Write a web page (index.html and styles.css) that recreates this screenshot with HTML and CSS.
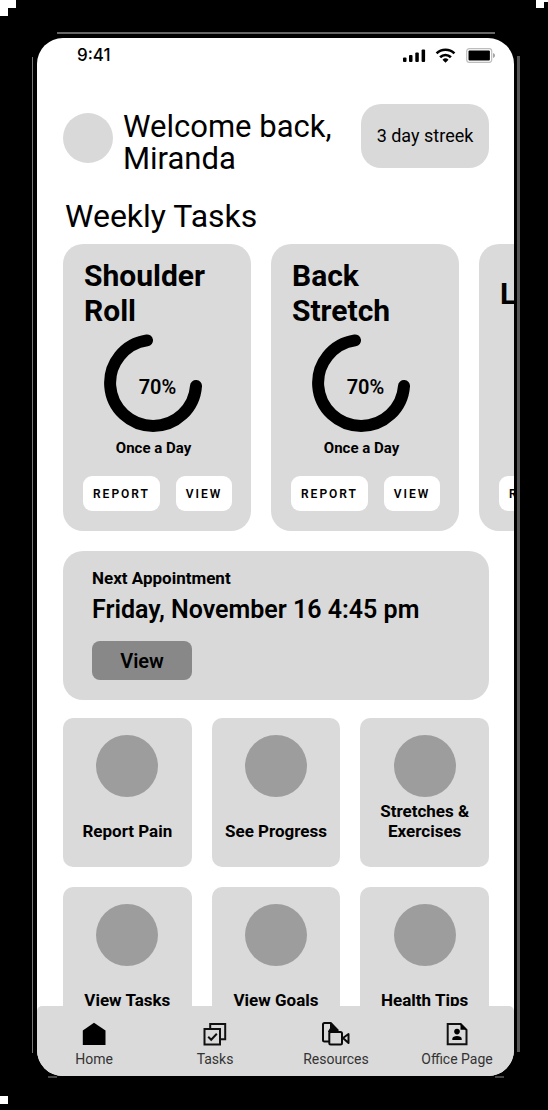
FILE: index.html
```html
<!DOCTYPE html>
<html lang="en">
<head>
<meta charset="utf-8">
<meta name="viewport" content="width=device-width, initial-scale=1">
<title>Home</title>
<link rel="stylesheet" href="styles.css">
</head>
<body>
<div class="frame">
  <div class="screen">
    <main class="content">
      <div class="status">
        <span class="clock">9:41</span>
        <svg class="status-icons" width="95" height="18" viewBox="0 0 95 18" aria-hidden="true">
          <rect x="1" y="11.500" width="3.500" height="4.500" rx="1"/>
          <rect x="7" y="9" width="3.500" height="7" rx="1"/>
          <rect x="13.300" y="6.500" width="3.500" height="9.500" rx="1"/>
          <rect x="19.600" y="3.500" width="3.500" height="12.500" rx="1"/>
          <g fill="none" stroke="#000" stroke-width="2.600">
            <path d="M34.600 7.400a12.600 12.600 0 0 1 17.800 0"/>
            <path d="M38.100 11.200a7.700 7.700 0 0 1 10.800 0"/>
          </g>
          <path d="M43.500 16.800l-3-3a4.300 4.300 0 0 1 6 0z"/>
          <rect x="64.700" y="2.700" width="25" height="13.600" rx="2.500" fill="#fff" stroke="#bdbdbd" stroke-width="1.200"/>
          <rect x="66.500" y="4.600" width="21.400" height="10" rx="1"/>
          <path d="M91 7v5c1.300-.4 2-1.300 2-2.500S92.300 7.400 91 7z" fill="#a5a5a5"/>
        </svg>
      </div>

      <header class="welcome">
        <span class="avatar"></span>
        <h1 class="greeting">Welcome back,<br>Miranda</h1>
        <span class="streak">3 day streek</span>
      </header>

      <h2 class="section-title">Weekly Tasks</h2>
      <section class="tasks" aria-label="Weekly Tasks">
        <article class="task">
          <h3 class="task-name">Shoulder Roll</h3>
          <div class="progress">
            <svg class="ring" width="98" height="98" viewBox="0 0 98 98" aria-hidden="true"><path d="M43 6.400A43 43 0 1 0 92 52"/></svg>
            <span class="percent">70%</span>
          </div>
          <p class="frequency">Once a Day</p>
          <div class="actions"><button class="action report" type="button">REPORT</button><button class="action" type="button">VIEW</button></div>
        </article>
        <article class="task">
          <h3 class="task-name">Back Stretch</h3>
          <div class="progress">
            <svg class="ring" width="98" height="98" viewBox="0 0 98 98" aria-hidden="true"><path d="M43 6.400A43 43 0 1 0 92 52"/></svg>
            <span class="percent">70%</span>
          </div>
          <p class="frequency">Once a Day</p>
          <div class="actions"><button class="action report" type="button">REPORT</button><button class="action" type="button">VIEW</button></div>
        </article>
        <article class="task">
          <h3 class="task-name">L</h3>
          <div class="actions"><button class="action report" type="button">REPORT</button></div>
        </article>
      </section>

      <section class="appointment">
        <h2 class="appointment-label">Next Appointment</h2>
        <p class="appointment-date">Friday, November 16 4:45 pm</p>
        <button class="appointment-view" type="button">View</button>
      </section>

      <section class="tiles" aria-label="Shortcuts">
        <a class="tile" href="#pain"><span class="dot"></span><span class="tile-label">Report Pain</span></a>
        <a class="tile" href="#progress"><span class="dot"></span><span class="tile-label">See Progress</span></a>
        <a class="tile" href="#stretches"><span class="dot"></span><span class="tile-label">Stretches &amp; Exercises</span></a>
        <a class="tile" href="#tasks"><span class="dot"></span><span class="tile-label">View Tasks</span></a>
        <a class="tile" href="#goals"><span class="dot"></span><span class="tile-label">View Goals</span></a>
        <a class="tile" href="#tips"><span class="dot"></span><span class="tile-label">Health Tips</span></a>
      </section>
    </main>

    <nav class="tabs">
      <a class="tab" href="#home">
        <svg width="28" height="24" viewBox="0 0 28 24" aria-hidden="true"><path d="M14 .8L2.800 8.500V23h22.700V8.500z"/></svg>
        Home
      </a>
      <a class="tab" href="#tasks">
        <svg width="28" height="24" viewBox="0 0 28 24" aria-hidden="true" fill="none" stroke="#111" stroke-width="2">
          <path d="M9.200 7V2h15v15.200h-5"/><rect x="3.500" y="7" width="15.500" height="15.500"/><path d="M7.200 14.700l3 3 5.600-6"/>
        </svg>
        Tasks
      </a>
      <a class="tab" href="#resources">
        <svg width="28" height="24" viewBox="0 0 28 24" aria-hidden="true" fill="none" stroke="#0a0a0a" stroke-width="2" stroke-linejoin="round">
          <path d="M7 19.500H2.500a1.500 1.500 0 0 1-1.500-1.500V2.500A1.500 1.500 0 0 1 2.500 1H8.500l7.500 7.500"/><path d="M9 1.500v5l-2 3h9z" fill="#0a0a0a"/>
          <rect x="7.300" y="10" width="12.700" height="12.400" rx="1.500" fill="#dadada"/><path d="M21 16l5.500-4v9z" fill="#dadada"/>
        </svg>
        Resources
      </a>
      <a class="tab" href="#office">
        <svg width="28" height="24" viewBox="0 0 28 24" aria-hidden="true">
          <path d="M4.700 2h13l5.800 5.800V22.300H4.700z" fill="none" stroke="#111" stroke-width="2"/>
          <path d="M17.500 1.500v6.300h6.500z"/><circle cx="14" cy="9.600" r="2.800"/><path d="M9.300 18v-1.300c0-3.600 9.400-3.600 9.400 0V18z"/>
        </svg>
        Office Page
      </a>
    </nav>
  </div>
</div>
</body>
</html>
```
FILE: styles.css
```css
* { box-sizing: border-box; }

body {
  margin: 0;
  height: 100vh;
  padding: 32px 28px 32px 32px;
  font-family: Roboto, "Liberation Sans", sans-serif;
  color: #000;
  background-color: #000;
  background-image:
    linear-gradient(#fff, #fff), linear-gradient(#fff, #fff),
    linear-gradient(#fff, #fff), linear-gradient(#fff, #fff),
    linear-gradient(#fff, #fff);
  background-repeat: no-repeat;
  background-size: 16px 8px, 8px 16px, 8px 8px, 4px 2px, 8px 8px;
  background-position: 0 0, 0 0, right 4px top 0, right 0 top 0, left 0 bottom 6px;
}

h1, h2, h3, p { margin: 0; }
a { color: inherit; text-decoration: none; }
button { border: 0; padding: 0; font-family: inherit; color: inherit; }

.frame {
  height: 100%;
  padding: 6px 6px 2px 5px;
  background-image:
    linear-gradient(#666, #666), linear-gradient(#777, #777),
    linear-gradient(#555, #555), linear-gradient(#444, #444),
    linear-gradient(#444, #444);
  background-repeat: no-repeat;
  background-size: calc(100% - 50px) 2px, 1px calc(100% - 50px), 3px calc(100% - 50px), 9px 2px, 9px 2px;
  background-position: 25px 0, 0 25px, 100% 24px, 16px 100%, right 16px bottom 0;
}

.screen {
  display: flex;
  flex-direction: column;
  height: 100%;
  overflow: hidden;
  border-radius: 26px;
  background: #fff;
}

.content {
  flex: 1;
  min-height: 0;
  overflow: hidden;
  padding: 0 25px 0 26px;
}

.status {
  display: flex;
  justify-content: space-between;
  align-items: center;
  height: 34px;
  margin-right: -8px;
  padding-left: 14px;
}
.clock { font: 500 17px/20px Inter, Roboto, sans-serif; }

.welcome {
  display: flex;
  align-items: center;
  gap: 10px;
  margin-top: 25px;
}
.avatar {
  width: 50px;
  height: 50px;
  margin-top: 4px;
  border-radius: 50%;
  background: #d9d9d9;
}
.greeting {
  flex: 1;
  margin-top: 14px;
  font-size: 31px;
  font-weight: 400;
  line-height: 32px;
  white-space: nowrap;
}
.streak {
  width: 128px;
  border-radius: 20px;
  background: #d9d9d9;
  font-size: 18px;
  line-height: 64px;
  text-align: center;
}

.section-title {
  margin: 22px 0 9px 2px;
  font-size: 32px;
  font-weight: 400;
  line-height: 38px;
}

.tasks {
  display: flex;
  gap: 20px;
  margin-right: -25px;
  overflow: hidden;
}
.task {
  display: flex;
  flex: 0 0 188px;
  flex-direction: column;
  padding: 14px 19px 20px 20px;
  border-radius: 20px;
  background: #dadada;
}
.task-name {
  display: flex;
  align-items: center;
  min-height: 70px;
  padding-left: 1px;
  font-size: 30px;
  font-weight: 700;
  line-height: 35px;
}
.progress {
  display: grid;
  place-items: center;
  margin-top: 6px;
}
.ring, .percent { grid-area: 1 / 1; }
.ring {
  margin-right: 10px;
  fill: none;
  stroke: #000;
  stroke-width: 12;
  stroke-linecap: round;
}
.percent {
  padding-top: 8px;
  font-size: 20px;
  font-weight: 600;
}
.frequency {
  margin: 7px 0 19px;
  padding-right: 8px;
  font-size: 15px;
  font-weight: 700;
  line-height: 18px;
  text-align: center;
}
.actions {
  display: flex;
  gap: 16px;
  margin-top: auto;
}
.action {
  width: 56px;
  height: 35px;
  border-radius: 9px;
  background: #fff;
  font-size: 12px;
  font-weight: 600;
  letter-spacing: 2px;
}
.report { width: 77px; }

.appointment {
  margin-top: 20px;
  padding: 17px 29px 20px;
  border-radius: 20px;
  background: #d9d9d9;
}
.appointment-label {
  font-size: 17px;
  font-weight: 700;
  line-height: 20px;
}
.appointment-date {
  margin-top: 8px;
  font-size: 25px;
  font-weight: 600;
  line-height: 28px;
}
.appointment-view {
  display: block;
  width: 100px;
  height: 39px;
  margin-top: 17px;
  border-radius: 8px;
  background: #888;
  font-size: 20px;
  font-weight: 600;
}

.tiles {
  display: grid;
  grid-template-columns: repeat(3, 1fr);
  gap: 20px;
  margin-top: 18px;
}
.tile {
  display: flex;
  flex-direction: column;
  align-items: center;
  height: 149px;
  padding: 17px 12px 26px;
  border-radius: 10px;
  background: #dadada;
}
.dot {
  width: 62px;
  height: 62px;
  border-radius: 50%;
  background: #9d9d9d;
}
.tile-label {
  margin: auto -8px 0;
  font-size: 17px;
  font-weight: 700;
  line-height: 20px;
  text-align: center;
}

.tabs {
  display: flex;
  justify-content: space-between;
  height: 70px;
  padding: 16px 19px 0;
  border-radius: 5px 5px 0 0;
  background: #dadada;
}
.tab {
  display: flex;
  flex-direction: column;
  align-items: center;
  gap: 4px;
  width: 76px;
  color: #333;
  font-size: 14px;
  line-height: 18px;
  white-space: nowrap;
}
```
